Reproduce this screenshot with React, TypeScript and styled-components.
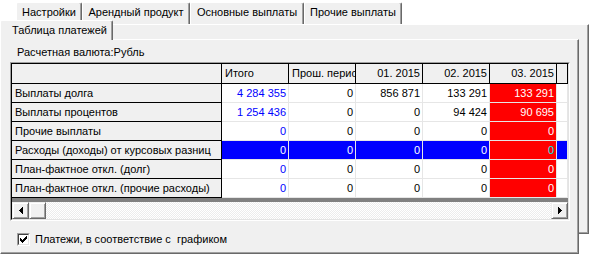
import React from "react";
import styled, { createGlobalStyle } from "styled-components";

const FACE = "#f0f0f0";
const LIGHT_LINE = "#e6e6e6";

const GlobalStyle = createGlobalStyle`
  html, body { margin: 0; padding: 0; background: #ffffff; }
  body {
    font-family: "Liberation Sans", Arial, sans-serif;
    font-size: 11px;
    color: #000;
  }
  *, *::before, *::after { box-sizing: border-box; }
`;

const Stage = styled.div`
  display: grid;
  width: 589px;
  height: 255px;
  overflow: hidden;
  background: #fff;
`;

/* ---------- back (outer) page control ---------- */
const BackLayer = styled.div`
  grid-area: 1 / 1;
  align-self: start;
  margin: 2px 0 0 16px;
  width: 573px;
  display: flex;
  flex-direction: column;
`;

const TabRow = styled.div`
  display: flex;
  height: 22px;
`;

const BackTab = styled.div<{ $w: number }>`
  flex: 0 0 ${(p) => p.$w}px;
  background: ${FACE};
  border-top: 1px solid #fff;
  border-left: 1px solid #fff;
  border-right: 1px solid #696969;
  border-radius: 2px 2px 0 0;
  box-shadow: inset -1px 0 0 #a0a0a0;
  padding-top: 3px;
  text-align: center;
  line-height: 13px;
  white-space: nowrap;
`;

const BackBody = styled.div`
  height: 210px;
  background: ${FACE};
  border-top: 1px solid #fff;
  border-right: 1px solid #696969;
  border-bottom: 1px solid #696969;
  box-shadow: inset -1px -1px 0 #a0a0a0;
`;

/* ---------- front (inner) page control ---------- */
const FrontLayer = styled.div`
  grid-area: 1 / 1;
  align-self: start;
  margin-top: 20px;
  width: 579px;
  display: flex;
  flex-direction: column;
  align-items: flex-start;
`;

const FrontTab = styled.div`
  position: relative;
  z-index: 1;
  width: 113px;
  height: 20px;
  margin-bottom: -1px;
  background: ${FACE};
  border-top: 1px solid #fff;
  border-left: 1px solid #fff;
  border-right: 1px solid #696969;
  box-shadow: inset -1px 0 0 #a0a0a0;
  border-radius: 2px 2px 0 0;
  padding: 3px 0 0 11px;
  line-height: 13px;
  white-space: nowrap;
`;

const FrontBody = styled.div`
  width: 579px;
  height: 215px;
  background: ${FACE};
  border: 1px solid;
  border-color: #fff #696969 #696969 #fff;
  box-shadow: inset -1px -1px 0 #a0a0a0;
  display: flex;
  flex-direction: column;
  align-items: flex-start;
  padding-left: 9px;
`;

const CurrencyLabel = styled.div`
  margin: 6px 0 0 7px;
  line-height: 13px;
  white-space: nowrap;
`;

/* ---------- grid ---------- */
const GridFrame = styled.div`
  margin-top: 3px;
  width: 560px;
  height: 159px;
  border: 1px solid;
  border-color: #a0a0a0 #fff #fff #a0a0a0;
`;

const GridInner = styled.div`
  height: 100%;
  border: 1px solid;
  border-color: #000 #e3e3e3 #e3e3e3 #000;
  background: #808080;
  display: flex;
  flex-direction: column;
`;

const CellGrid = styled.div`
  display: grid;
  grid-template-columns: 210px repeat(5, 67px) 11px;
  grid-template-rows: 20px repeat(6, 19px);
`;

const HeadCell = styled.div<{ $align?: "left" | "right" }>`
  background: ${FACE};
  border-right: 1px solid #000;
  border-bottom: 1px solid #000;
  padding: 0 2px 0 3px;
  line-height: 19px;
  text-align: ${(p) => p.$align ?? "left"};
  overflow: hidden;
  white-space: nowrap;
`;

const RowLabel = styled.div`
  background: ${FACE};
  border-right: 1px solid #000;
  border-bottom: 1px solid #000;
  padding-left: 3px;
  line-height: 18px;
  overflow: hidden;
  white-space: nowrap;
`;

type Tone = "total" | "plain" | "red" | "filler";

const toneBg = (tone: Tone, sel: boolean) =>
  tone === "red" ? "#ff0000" : sel ? "#0000ff" : "#ffffff";
const toneFg = (tone: Tone, sel: boolean) => {
  if (tone === "red") return sel ? "#00e8e8" : "#ffffff";
  if (sel) return "#ffffff";
  return tone === "total" ? "#0000ff" : "#000000";
};

const DataCell = styled.div<{ $tone: Tone; $sel: boolean }>`
  background: ${(p) => toneBg(p.$tone, p.$sel)};
  color: ${(p) => toneFg(p.$tone, p.$sel)};
  border-right: 1px solid ${LIGHT_LINE};
  border-bottom: 1px solid ${LIGHT_LINE};
  padding-right: 2px;
  text-align: right;
  line-height: 18px;
  overflow: hidden;
  white-space: nowrap;
`;

/* ---------- scrollbar ---------- */
const ScrollBar = styled.div`
  margin-top: auto;
  height: 17px;
  display: flex;
`;

const ScrollButton = styled.div`
  flex: 0 0 17px;
  height: 17px;
  background: ${FACE};
  border: 1px solid;
  border-color: #f0f0f0 #696969 #696969 #f0f0f0;
  box-shadow: inset 1px 1px 0 #fff, inset -1px -1px 0 #a0a0a0;
  display: flex;
  align-items: center;
  justify-content: center;
`;

const ScrollTrack = styled.div`
  flex: 1;
  background-color: #fff;
  background-image: repeating-conic-gradient(#ececec 0% 25%, #ffffff 0% 50%);
  background-size: 2px 2px;
`;

/* ---------- checkbox ---------- */
const CheckRow = styled.label`
  margin: 12px 0 0 7px;
  display: flex;
  align-items: center;
  gap: 5px;
  line-height: 13px;
  white-space: pre;
`;

const CheckBox = styled.span`
  width: 13px;
  height: 13px;
  border: 1px solid;
  border-color: #a0a0a0 #fff #fff #a0a0a0;
  display: flex;
`;

const CheckInner = styled.span`
  flex: 1;
  background: #fff;
  border: 1px solid;
  border-color: #404040 #e3e3e3 #e3e3e3 #404040;
  display: flex;
  align-items: center;
  justify-content: center;
`;

const ArrowLeft = () => (
  <svg width="4" height="7" viewBox="0 0 4 7" shapeRendering="crispEdges">
    <rect x="3" y="0" width="1" height="7" />
    <rect x="2" y="1" width="1" height="5" />
    <rect x="1" y="2" width="1" height="3" />
    <rect x="0" y="3" width="1" height="1" />
  </svg>
);

const ArrowRight = () => (
  <svg width="4" height="7" viewBox="0 0 4 7" shapeRendering="crispEdges">
    <rect x="0" y="0" width="1" height="7" />
    <rect x="1" y="1" width="1" height="5" />
    <rect x="2" y="2" width="1" height="3" />
    <rect x="3" y="3" width="1" height="1" />
  </svg>
);

const CheckMark = () => (
  <svg width="7" height="7" viewBox="0 0 7 7" shapeRendering="crispEdges">
    <rect x="6" y="0" width="1" height="3" />
    <rect x="5" y="1" width="1" height="3" />
    <rect x="4" y="2" width="1" height="3" />
    <rect x="3" y="3" width="1" height="3" />
    <rect x="2" y="4" width="1" height="3" />
    <rect x="1" y="3" width="1" height="3" />
    <rect x="0" y="2" width="1" height="3" />
  </svg>
);

const backTabs: { label: string; w: number }[] = [
  { label: "Настройки", w: 66 },
  { label: "Арендный продукт", w: 108 },
  { label: "Основные выплаты", w: 114 },
  { label: "Прочие выплаты", w: 98 },
];

const headers: { label: string; align: "left" | "right" }[] = [
  { label: "Итого", align: "left" },
  { label: "Прош. период", align: "left" },
  { label: "01. 2015", align: "right" },
  { label: "02. 2015", align: "right" },
  { label: "03. 2015", align: "right" },
];

const rows: { label: string; values: string[]; selected?: boolean }[] = [
  { label: "Выплаты долга", values: ["4 284 355", "0", "856 871", "133 291", "133 291"] },
  { label: "Выплаты процентов", values: ["1 254 436", "0", "0", "94 424", "90 695"] },
  { label: "Прочие выплаты", values: ["0", "0", "0", "0", "0"] },
  {
    label: "Расходы (доходы) от курсовых разниц",
    values: ["0", "0", "0", "0", "0"],
    selected: true,
  },
  { label: "План-фактное откл. (долг)", values: ["0", "0", "0", "0", "0"] },
  { label: "План-фактное откл. (прочие расходы)", values: ["0", "0", "0", "0", "0"] },
];

const toneFor = (i: number): Tone => (i === 0 ? "total" : i === 4 ? "red" : "plain");

export default function App() {
  return (
    <>
      <GlobalStyle />
      <Stage>
        <BackLayer>
          <TabRow>
            {backTabs.map((t) => (
              <BackTab key={t.label} $w={t.w}>
                {t.label}
              </BackTab>
            ))}
          </TabRow>
          <BackBody />
        </BackLayer>

        <FrontLayer>
          <FrontTab>Таблица платежей</FrontTab>
          <FrontBody>
            <CurrencyLabel>Расчетная валюта:Рубль</CurrencyLabel>
            <GridFrame>
              <GridInner>
                <CellGrid>
                  <HeadCell />
                  {headers.map((h) => (
                    <HeadCell key={h.label} $align={h.align}>
                      {h.label}
                    </HeadCell>
                  ))}
                  <HeadCell />
                  {rows.map((r) => (
                    <React.Fragment key={r.label}>
                      <RowLabel>{r.label}</RowLabel>
                      {r.values.map((v, i) => (
                        <DataCell key={i} $tone={toneFor(i)} $sel={!!r.selected}>
                          {v}
                        </DataCell>
                      ))}
                      <DataCell $tone="filler" $sel={!!r.selected} />
                    </React.Fragment>
                  ))}
                </CellGrid>
                <ScrollBar>
                  <ScrollButton>
                    <ArrowLeft />
                  </ScrollButton>
                  <ScrollButton />
                  <ScrollTrack />
                  <ScrollButton>
                    <ArrowRight />
                  </ScrollButton>
                </ScrollBar>
              </GridInner>
            </GridFrame>
            <CheckRow>
              <CheckBox>
                <CheckInner>
                  <CheckMark />
                </CheckInner>
              </CheckBox>
              {"Платежи, в соответствие с  графиком"}
            </CheckRow>
          </FrontBody>
        </FrontLayer>
      </Stage>
    </>
  );
}
